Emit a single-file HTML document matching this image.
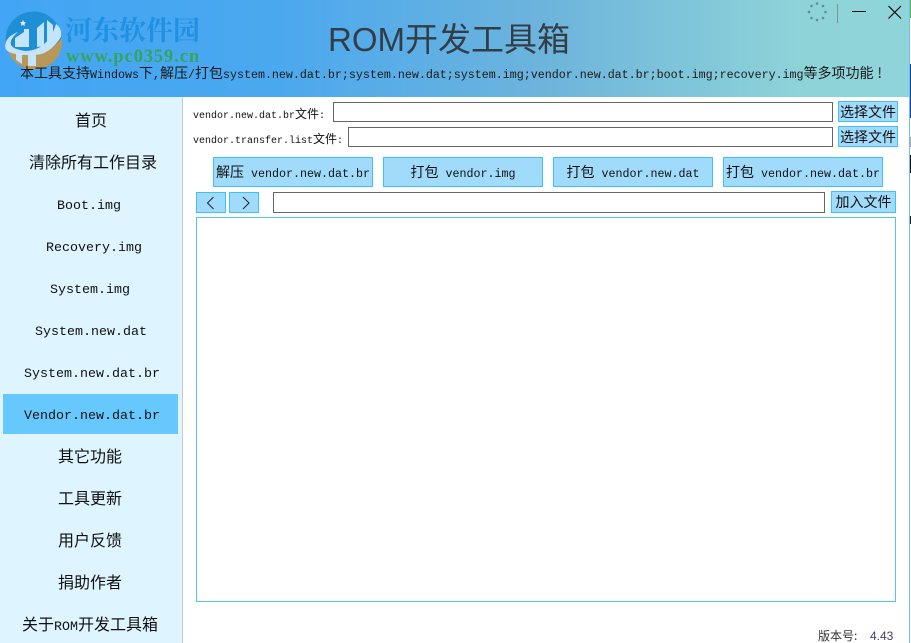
<!DOCTYPE html>
<html><head><meta charset="utf-8"><style>
html,body{margin:0;padding:0;background:#fff}
#r{position:relative;width:911px;height:643px;overflow:hidden;background:#fff;font-family:"Liberation Mono","WenQuanYi Zen Hei","Noto Sans CJK SC",monospace;color:#111}
#r div{position:absolute;box-sizing:border-box;white-space:nowrap}
.c{font-family:"WenQuanYi Zen Hei","Noto Sans CJK SC",sans-serif}
.hd{left:0;top:0;width:909px;height:97px;background:linear-gradient(90deg,#42a5f5 0%,#4aa8ee 30%,#6db4dc 60%,#8ed3d8 88%,#8fd4d8 100%)}
.side{left:0;top:97px;width:183px;height:546px;background:#def4ff;border-right:1px solid #c4ccd0}
.it{left:0;width:182px;height:24px;line-height:24px;text-align:center;font-size:13.33px}
.it .c{font-size:16px}
.sel{left:3px;top:394px;width:175px;height:40px;background:#66c8fd}
.btn{background:#a0dbfb;border:1px solid #3fc0fb;text-align:center;font-size:11.67px}
.btn .c{font-size:14px}
.inp{background:#fff;border:1px solid #666}
.lb{font-size:10px;height:16px;line-height:16px}
.lb .c{font-size:12px}
.t .c{font-size:14px}
</style></head><body><div id="r">
<div class="hd"></div>
<svg style="position:absolute;left:0;top:0" width="70" height="72" viewBox="0 0 70 72">
<circle cx="33.500" cy="39.500" r="28" fill="#1e8fd5"/>
<path d="M7 48 Q20 56 38 55 Q52 50 62 38 A28 28 0 0 1 7 48Z" fill="#b8985a"/>
<path d="M18 32 Q0 48 26 51 Q48 50 56 24 Q62 28 61 37 Q50 54 36 55 L36 66 L28 66 L28 55 L22 55 L22 64 L16 60 L16 54 Q2 52 6 42 Q8 36 18 32Z" fill="#c4e4fa"/>
<path d="M15 38 L24 32 L24 29 L29 29 L29 47 L15 47Z" fill="#c4e4fa"/>
<path d="M37 47 L37 28 L44 22 L44 46Z M47 20 L53 25 L53 39 L47 43Z" fill="#c4e4fa"/>
<path d="M23 20l1 2 2 .4-1.500 1.500.4 2-1.900-1-1.900 1 .4-2L20 22.400l2-.4z" fill="#d8effc"/>
</svg>
<div style="left:65px;top:10px;font-size:27px;line-height:38px;font-weight:700;color:#1f90e2;font-family:'Noto Serif CJK SC','Noto Sans CJK SC',serif">河东软件园</div>
<div style="left:66px;top:47px;font-family:'Liberation Serif',serif;font-weight:700;font-size:18.500px;line-height:20px;color:#35a45c;letter-spacing:.9px">www.pc0359.cn</div>
<div class="t" style="left:20px;top:64px;height:18px;line-height:18px;font-size:11.67px;color:#1a1a1a"><span class="c">本工具支持</span>Windows<span class="c">下</span>,<span class="c">解压</span>/<span class="c">打包</span>system.new.dat.br;system.new.dat;system.img;vendor.new.dat.br;boot.img;recovery.img<span class="c">等多项功能</span><span class="c" style="margin-left:4px">!</span></div>
<div style="left:328px;top:15px;height:50px;line-height:50px;font-size:33px;color:#333d48;font-family:'Liberation Sans','Noto Sans CJK SC',sans-serif">ROM开发工具箱</div>
<svg style="position:absolute;left:800px;top:0" width="109" height="30" viewBox="0 0 109 30">
<g fill="#5f8aa0"><circle cx="17" cy="3.500" r="1.300"/><circle cx="23" cy="6" r="1.300"/><circle cx="25.500" cy="12" r="1.300"/><circle cx="23" cy="18" r="1.300"/><circle cx="17" cy="20" r="1.300"/><circle cx="11.500" cy="18" r="1.300"/><circle cx="9" cy="12" r="1.300"/><circle cx="11.500" cy="6" r="1.300"/></g>
<path d="M37.500 4V23" stroke="#7f9095" stroke-width="1"/>
<path d="M52 11.500H66" stroke="#111" stroke-width="1"/>
<path d="M88.500 6L101 18.500M101 6L88.500 18.500" stroke="#111" stroke-width="1.200"/>
</svg>
<div class="side"></div>
<div class="sel"></div>
<div class="it" style="top:107px"><span class="c">首页</span></div>
<div class="it" style="top:149px;left:2px"><span class="c">清除所有工作目录</span></div>
<div class="it" style="top:195px;left:-2px">Boot.img</div>
<div class="it" style="top:237px;left:3px">Recovery.img</div>
<div class="it" style="top:279px;left:-1px">System.img</div>
<div class="it" style="top:321px">System.new.dat</div>
<div class="it" style="top:363px;left:1px">System.new.dat.br</div>
<div class="it" style="top:405px;left:1px">Vendor.new.dat.br</div>
<div class="it" style="top:443px;left:-1px"><span class="c">其它功能</span></div>
<div class="it" style="top:485px;left:-1px"><span class="c">工具更新</span></div>
<div class="it" style="top:527px;left:-1px"><span class="c">用户反馈</span></div>
<div class="it" style="top:569px;left:-1px"><span class="c">捐助作者</span></div>
<div class="it" style="top:611px;left:-1px"><span class="c">关于</span>ROM<span class="c">开发工具箱</span></div>
<div class="lb" style="left:193px;top:106px">vendor.new.dat.br<span class="c">文件</span>:</div>
<div class="lb" style="left:193px;top:131px">vendor.transfer.list<span class="c">文件</span>:</div>
<div class="inp" style="left:333px;top:102px;width:500px;height:20px"></div>
<div class="inp" style="left:348px;top:127px;width:485px;height:20px"></div>
<div class="btn" style="left:838px;top:101px;width:60px;height:21px;line-height:20px"><span class="c">选择文件</span></div>
<div class="btn" style="left:838px;top:126px;width:60px;height:21px;line-height:20px"><span class="c">选择文件</span></div>
<div class="btn" style="left:213px;top:157px;width:160px;height:30px;line-height:28px"><span class="c">解压</span> vendor.new.dat.br</div>
<div class="btn" style="left:383px;top:157px;width:160px;height:30px;line-height:28px"><span class="c">打包</span> vendor.img</div>
<div class="btn" style="left:553px;top:157px;width:160px;height:30px;line-height:28px"><span class="c">打包</span> vendor.new.dat</div>
<div class="btn" style="left:723px;top:157px;width:160px;height:30px;line-height:28px"><span class="c">打包</span> vendor.new.dat.br</div>
<div class="btn" style="left:196px;top:192px;width:30px;height:21px"></div>
<div class="btn" style="left:229px;top:192px;width:30px;height:21px"></div>
<svg style="position:absolute;left:196px;top:192px" width="64" height="21" viewBox="0 0 64 21" fill="none" stroke="#222" stroke-width="1"><path d="M17.500 5L11.500 11L17.500 17M47 5L53 11L47 17"/></svg>
<div class="inp" style="left:273px;top:192px;width:552px;height:21px"></div>
<div class="btn" style="left:831px;top:191px;width:65px;height:22px;line-height:20px"><span class="c">加入文件</span></div>
<div style="left:196px;top:217px;width:700px;height:385px;background:#fff;border:1px solid #54c4f4"></div>
<div style="left:818px;top:628px;height:16px;line-height:16px;font-size:12px;color:#333"><span class="c">版本号:</span></div>
<div style="left:870px;top:628px;height:16px;line-height:16px;font-size:12px;color:#4a3a6a;font-family:'Liberation Sans',sans-serif">4.43</div>
<div style="left:909px;top:0;width:1px;height:643px;background:#6fc0f0"></div>
<div style="left:910px;top:0;width:1px;height:18px;background:#5fb83a"></div>
<div style="left:910px;top:64px;width:1px;height:54px;background:#12409a"></div>
<div style="left:910px;top:155px;width:1px;height:18px;background:#111"></div>
<div style="left:910px;top:137px;width:1px;height:10px;background:#aaa"></div>
<div style="left:910px;top:216px;width:1px;height:8px;background:#222"></div>
</div></body></html>
